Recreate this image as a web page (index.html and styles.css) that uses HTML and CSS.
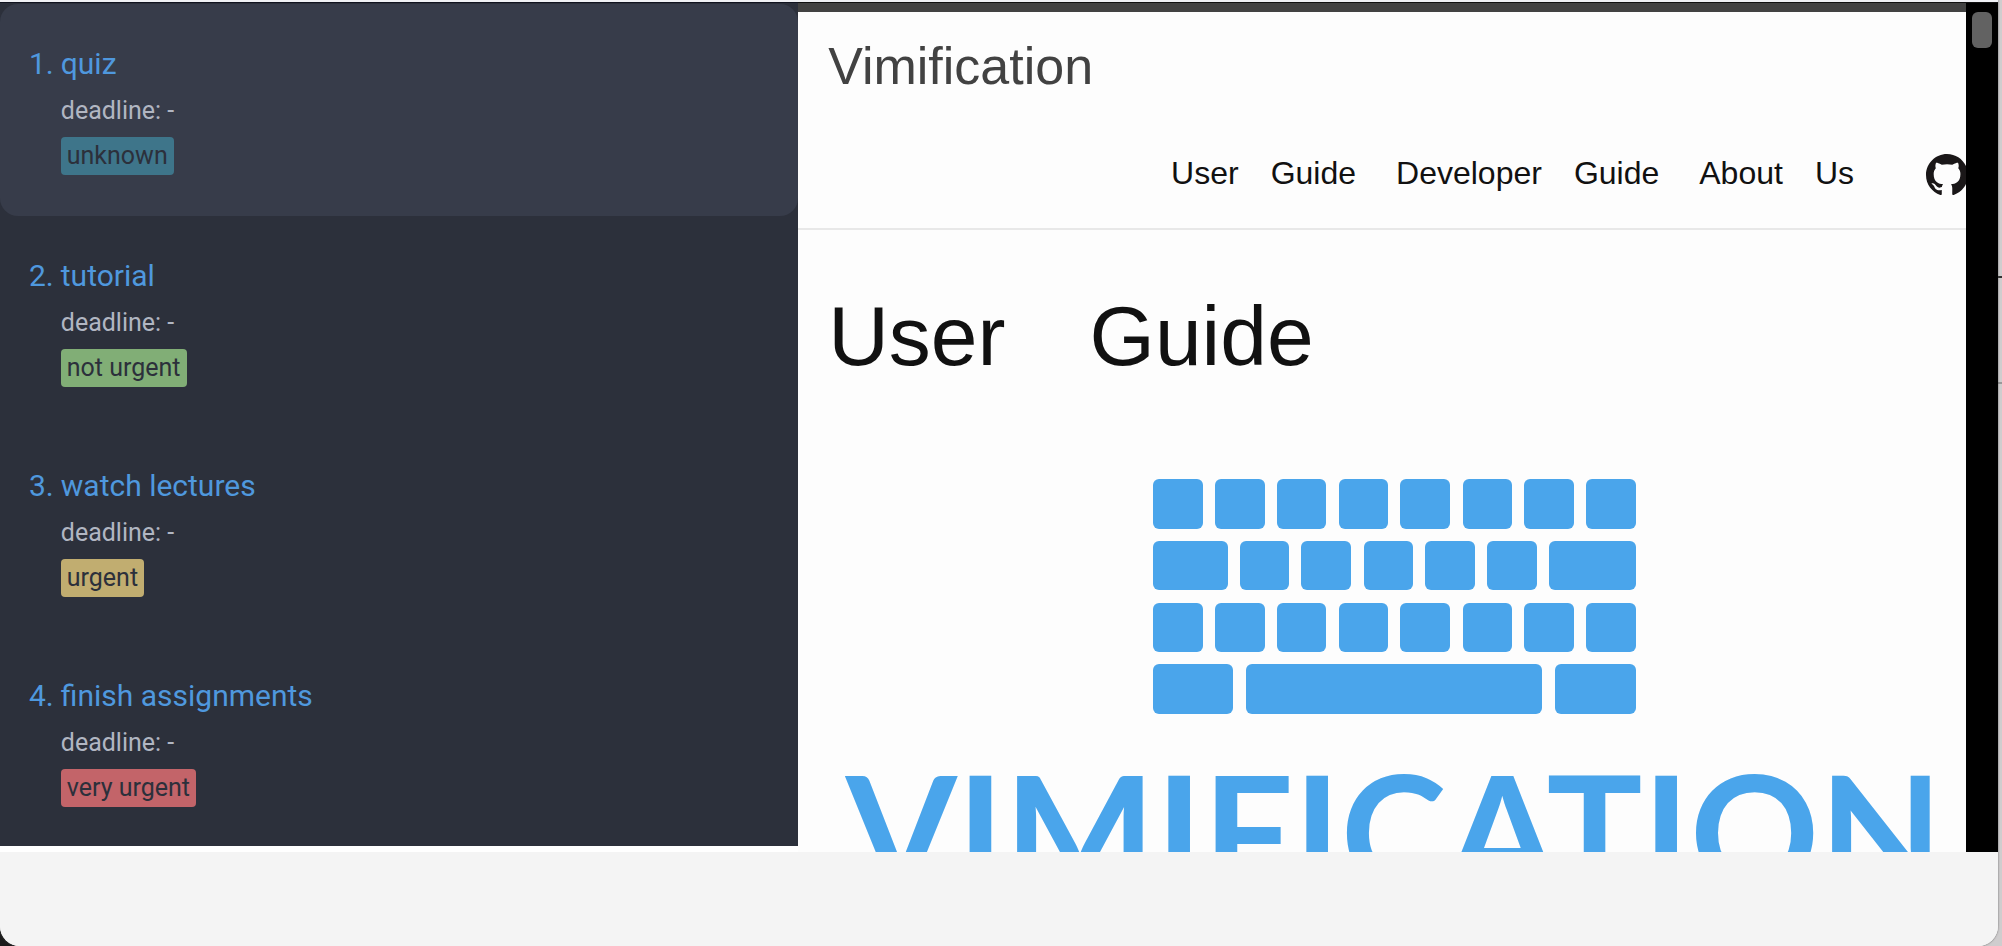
FILE: index.html
```html
<!DOCTYPE html>
<html lang="en">
<head>
<meta charset="utf-8">
<title>Vimification</title>
<link rel="stylesheet" href="styles.css">
</head>
<body>
<div class="desktop">
  <div class="window">
    <main class="panes">
      <ol class="tasks">
        <li class="task task-selected">
          <span class="number">1.</span>
          <div class="details">
            <h2 class="title">quiz</h2>
            <p class="deadline">deadline: -</p>
            <span class="tag tag-unknown">unknown</span>
          </div>
        </li>
        <li class="task">
          <span class="number">2.</span>
          <div class="details">
            <h2 class="title">tutorial</h2>
            <p class="deadline">deadline: -</p>
            <span class="tag tag-low">not urgent</span>
          </div>
        </li>
        <li class="task">
          <span class="number">3.</span>
          <div class="details">
            <h2 class="title">watch lectures</h2>
            <p class="deadline">deadline: -</p>
            <span class="tag tag-medium">urgent</span>
          </div>
        </li>
        <li class="task">
          <span class="number">4.</span>
          <div class="details">
            <h2 class="title">finish assignments</h2>
            <p class="deadline">deadline: -</p>
            <span class="tag tag-high">very urgent</span>
          </div>
        </li>
      </ol>
      <div class="browser">
        <div class="page">
          <header class="site-header">
            <a class="brand" href="#">Vimification</a>
            <nav class="nav">
              <a class="nav-link" href="#"><span>User</span> <span>Guide</span></a>
              <a class="nav-link" href="#"><span>Developer</span> <span>Guide</span></a>
              <a class="nav-link" href="#"><span>About</span> <span>Us</span></a>
              <a class="github" href="#" aria-label="GitHub">
                <svg viewBox="0 0 16 16" aria-hidden="true"><path fill="#1a1718" d="M8 0C3.58 0 0 3.58 0 8c0 3.54 2.29 6.53 5.47 7.59.4.07.55-.17.55-.38 0-.19-.01-.82-.01-1.49-2.01.37-2.53-.49-2.69-.94-.09-.23-.48-.94-.82-1.13-.28-.15-.68-.52-.01-.53.63-.01 1.08.58 1.23.82.72 1.21 1.87.87 2.33.66.07-.52.28-.87.51-1.07-1.78-.2-3.64-.89-3.64-3.95 0-.87.31-1.59.82-2.15-.08-.2-.36-1.02.08-2.12 0 0 .67-.21 2.2.82.64-.18 1.32-.27 2-.27s1.36.09 2 .27c1.53-1.04 2.2-.82 2.2-.82.44 1.1.16 1.92.08 2.12.51.56.82 1.27.82 2.15 0 3.07-1.87 3.75-3.65 3.95.29.25.54.73.54 1.48 0 1.07-.01 1.93-.01 2.2 0 .21.15.46.55.38A8.01 8.01 0 0 0 16 8c0-4.42-3.58-8-8-8z"/></svg>
              </a>
            </nav>
          </header>
          <h1 class="heading"><span>User</span> <span>Guide</span></h1>
          <div class="logo">
            <svg class="keyboard" viewBox="0 0 483 235" role="img" aria-label="Keyboard" fill="#4aa5eb">
              <rect x="0" y="0" width="50" height="50" rx="6"/><rect x="62" y="0" width="50" height="50" rx="6"/><rect x="124" y="0" width="49" height="50" rx="6"/><rect x="186" y="0" width="49" height="50" rx="6"/><rect x="247" y="0" width="50" height="50" rx="6"/><rect x="310" y="0" width="49" height="50" rx="6"/><rect x="371" y="0" width="50" height="50" rx="6"/><rect x="433" y="0" width="50" height="50" rx="6"/>
              <rect x="0" y="62" width="75" height="49" rx="6"/><rect x="87" y="62" width="49" height="49" rx="6"/><rect x="148" y="62" width="50" height="49" rx="6"/><rect x="211" y="62" width="49" height="49" rx="6"/><rect x="272" y="62" width="50" height="49" rx="6"/><rect x="334" y="62" width="50" height="49" rx="6"/><rect x="396" y="62" width="87" height="49" rx="6"/>
              <rect x="0" y="124" width="50" height="49" rx="6"/><rect x="62" y="124" width="50" height="49" rx="6"/><rect x="124" y="124" width="49" height="49" rx="6"/><rect x="186" y="124" width="49" height="49" rx="6"/><rect x="247" y="124" width="50" height="49" rx="6"/><rect x="310" y="124" width="49" height="49" rx="6"/><rect x="371" y="124" width="50" height="49" rx="6"/><rect x="433" y="124" width="50" height="49" rx="6"/>
              <rect x="0" y="185" width="80" height="50" rx="6"/><rect x="93" y="185" width="296" height="50" rx="6"/><rect x="402" y="185" width="81" height="50" rx="6"/>
            </svg>
            <div class="wordmark">VIMIFICATION</div>
          </div>
        </div>
        <div class="scrollbar"><div class="thumb"></div></div>
      </div>
    </main>
    <footer class="footer"></footer>
  </div>
</div>
</body>
</html>
```
FILE: styles.css
```css
* {
  box-sizing: border-box;
}

body {
  margin: 0;
}

h1,
h2,
p,
ol {
  margin: 0;
  padding: 0;
  font-weight: 400;
}

a {
  color: inherit;
  text-decoration: none;
}

.desktop {
  height: 100vh;
  padding-right: 4px;
  overflow: hidden;
  background:
    linear-gradient(#333, #333) right 276px / 4px 2px no-repeat,
    linear-gradient(#999, #999) right 382px / 4px 2px no-repeat,
    linear-gradient(90deg, #1c1c1c 50%, #cfcdce 50%);
}

.window {
  display: flex;
  flex-direction: column;
  height: 100%;
  overflow: hidden;
  border-top: 2px solid #f0f1f5;
  border-radius: 0 0 20px 20px;
  background: #fff;
  box-shadow: 0 0 2px #555;
}

.panes {
  display: flex;
  flex: 1;
  min-height: 0;
}

.tasks {
  width: calc(40% - 1px);
  margin-bottom: 6px;
  padding-top: 1px;
  border-top: 1px solid #10131f;
  background: #2c303b;
  font-family: Roboto, sans-serif;
  list-style: none;
}

.task {
  display: flex;
  gap: 7px;
  padding: 37px 29px 39px;
}

.task-selected {
  padding-bottom: 41px;
  border-radius: 18px;
  background: #373c4a;
}

.number,
.title {
  color: #4f98de;
  font-size: 30px;
  line-height: 46px;
}

.title {
  margin-bottom: 1px;
}

.deadline {
  margin-bottom: 3px;
  color: #b1b6c2;
  font-size: 25px;
  line-height: 46px;
}

.tag {
  display: block;
  width: fit-content;
  padding: 0 6px;
  border-radius: 4px;
  color: #2c303b;
  font-size: 25px;
  line-height: 38px;
}

.tag-unknown {
  background: #3e758a;
}

.tag-low {
  background: #81ae76;
}

.tag-medium {
  background: #c1ad70;
}

.tag-high {
  background: #c36469;
}

.browser {
  display: flex;
  flex: 1;
  min-width: 0;
  border-top: 1px solid #111;
  background: #fdfdfd;
  color: #111;
  font-family: "Liberation Sans", Arial, sans-serif;
}

.page {
  flex: 1;
  min-width: 0;
  overflow: hidden;
  border-top: 9px solid #424242;
}

.site-header {
  padding: 22px 0 30px 30px;
  border-bottom: 2px solid #e8e8e8;
}

.brand {
  display: block;
  color: #424242;
  font-size: 52px;
  line-height: 64px;
}

.nav {
  display: flex;
  justify-content: flex-end;
  align-items: flex-end;
  gap: 40px;
  margin-top: 52px;
  margin-right: -2px;
  font-size: 32px;
  line-height: 46px;
}

.nav-link {
  display: flex;
  gap: 32px;
  padding-bottom: 2px;
}

.github {
  display: flex;
  width: 42px;
  margin-left: 32px;
  padding: 4px 0 2px;
}

.github svg {
  width: 100%;
}

.heading {
  display: flex;
  gap: 84px;
  padding: 54px 30px 58px;
  font-size: 84px;
  line-height: 104px;
}

.logo {
  display: flex;
  flex-direction: column;
  align-items: center;
  gap: 35px;
  padding: 33px 0 0 24px;
  color: #4aa5eb;
}

.keyboard {
  width: 483px;
}

.wordmark {
  font-family: Lato, sans-serif;
  font-size: 160px;
  font-weight: 700;
  line-height: 160px;
}

.scrollbar {
  width: 32px;
  padding: 9px 6px;
  background: #000;
}

.thumb {
  height: 36px;
  border-radius: 6px;
  background: #626262;
}

.footer {
  flex: none;
  height: 94px;
  background: #f4f4f4;
}
```
